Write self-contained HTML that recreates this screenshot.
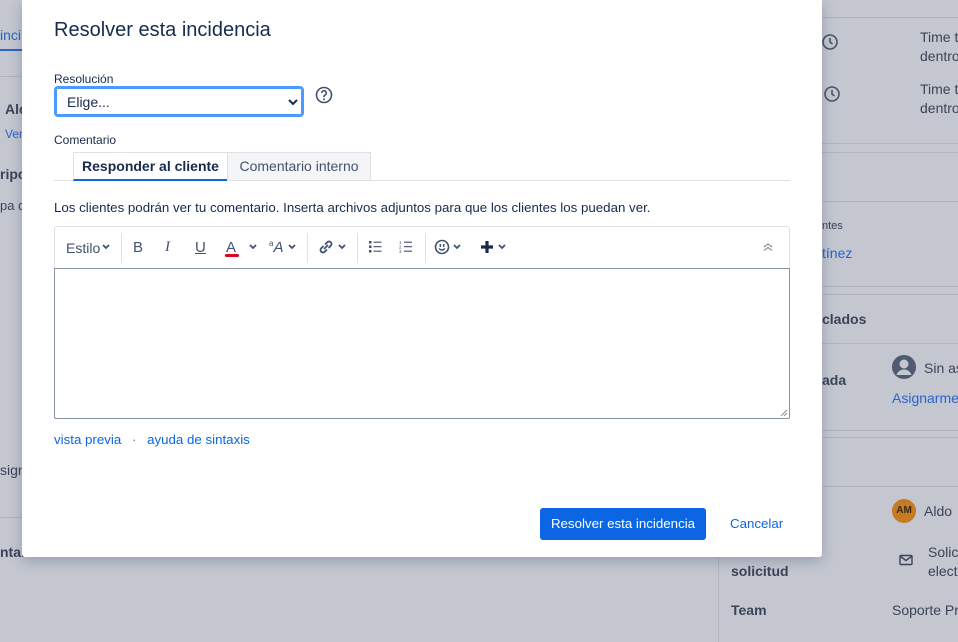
<!DOCTYPE html>
<html><head><meta charset="utf-8"><style>
*{box-sizing:border-box;margin:0;padding:0}
body{width:958px;height:642px;overflow:hidden;background:#c4c7d0;font-family:"Liberation Sans","DejaVu Sans",sans-serif;position:relative;color:#172b4d}
.a{position:absolute;white-space:nowrap}
.hl{position:absolute;height:1px;background:#b0b4be}
.bg{color:#3b4358;font-size:14px}
.blue{color:#2a64c9}
.modal{position:absolute;left:22px;top:0;width:800px;height:557px;background:#fff;border-radius:0 0 3px 3px;box-shadow:0 4px 14px rgba(9,30,66,.25)}
.m{position:absolute;white-space:nowrap}
.tb{position:absolute;top:250px;font-size:15px;color:#42526e}
.sep{position:absolute;top:233px;width:1px;height:30px;background:#dfe1e6}
.cv{position:absolute;top:244px}
</style></head><body>
<div class="a blue" style="left:0;top:27px;font-size:14px">inci</div>
<div class="a" style="left:0;top:49px;width:22px;height:2px;background:#2a64c9"></div>
<div class="hl" style="left:0;top:76px;width:22px"></div>
<div class="a bg" style="left:5px;top:101px;font-weight:bold">Alc</div>
<div class="a blue" style="left:5px;top:127px;font-size:12px">Ver</div>
<div class="a bg" style="left:0;top:166px;font-weight:bold">ripc</div>
<div class="a bg" style="left:0;top:198px;font-size:13px">pa d</div>
<div class="a bg" style="left:0;top:462px">sign</div>
<div class="hl" style="left:0;top:517px;width:22px"></div>
<div class="a bg" style="left:0;top:544px;font-weight:bold">ntar</div>

<div class="hl" style="left:822px;top:17px;width:136px"></div>
<svg class="a" style="left:821px;top:33px" width="18" height="18" viewBox="0 0 18 18"><circle cx="9" cy="9" r="7" fill="none" stroke="#4a5368" stroke-width="1.6"/><path d="M9 5v4l2.5 2" fill="none" stroke="#4a5368" stroke-width="1.6"/></svg>
<svg class="a" style="left:823px;top:85px" width="18" height="18" viewBox="0 0 18 18"><circle cx="9" cy="9" r="7" fill="none" stroke="#4a5368" stroke-width="1.6"/><path d="M9 5v4l2.5 2" fill="none" stroke="#4a5368" stroke-width="1.6"/></svg>
<div class="a bg" style="left:920px;top:28px;line-height:19px">Time t<br>dentro</div>
<div class="a bg" style="left:920px;top:80px;line-height:19px">Time t<br>dentro</div>
<div class="hl" style="left:822px;top:143px;width:136px"></div>
<div class="hl" style="left:822px;top:152px;width:136px"></div>
<div class="hl" style="left:822px;top:201px;width:136px"></div>
<div class="a bg" style="left:822px;top:220px;font-size:11px">ntes</div>
<div class="a blue" style="left:822px;top:245px;font-size:14px">tínez</div>
<div class="hl" style="left:822px;top:286px;width:136px"></div>
<div class="hl" style="left:822px;top:294px;width:136px"></div>
<div class="a bg" style="left:822px;top:311px;font-weight:bold">clados</div>
<div class="hl" style="left:822px;top:343px;width:136px"></div>
<div class="a bg" style="left:822px;top:372px;font-weight:bold">ada</div>
<svg class="a" style="left:891px;top:354px" width="26" height="26" viewBox="0 0 26 26"><circle cx="13" cy="13" r="12" fill="#505a70"/><circle cx="13" cy="10" r="4.5" fill="#c4c7d0"/><path d="M5.5 21c1.5-4 4.5-5.5 7.5-5.5s6 1.5 7.5 5.5" fill="#c4c7d0"/></svg>
<div class="a bg" style="left:924px;top:360px">Sin as</div>
<div class="a blue" style="left:892px;top:390px;font-size:14px">Asignarme</div>
<div class="hl" style="left:822px;top:430px;width:136px"></div>
<div class="hl" style="left:822px;top:437px;width:136px"></div>
<div class="hl" style="left:718px;top:486px;width:240px"></div>
<div class="a" style="left:718px;top:486px;width:1px;height:156px;background:#b0b4be"></div>
<div class="a" style="left:892px;top:499px;width:24px;height:24px;border-radius:50%;background:#c77a22;color:#3a2a10;font-size:10px;font-weight:bold;text-align:center;line-height:24px">AM</div>
<div class="a bg" style="left:924px;top:503px">Aldo</div>
<svg class="a" style="left:899px;top:554px" width="14" height="12" viewBox="0 0 14 12"><rect x="1" y="1.5" width="12" height="9" rx="1" fill="none" stroke="#3b4358" stroke-width="1.4"/><path d="M1.5 2.5l5.5 4 5.5-4" fill="none" stroke="#3b4358" stroke-width="1.4"/></svg>
<div class="a bg" style="left:928px;top:543px;line-height:19px">Solic<br>elect</div>
<div class="a bg" style="left:731px;top:563px;font-weight:bold">solicitud</div>
<div class="a bg" style="left:731px;top:602px;font-weight:bold">Team</div>
<div class="a bg" style="left:892px;top:602px">Soporte Pr</div>

<div class="modal">
<div class="m" style="left:32px;top:19px;font-size:20px;color:#172b4d">Resolver esta incidencia</div>
<div class="m" style="left:32px;top:72px;font-size:12px;color:#172b4d">Resolución</div>
<div class="m" style="left:32px;top:86px;width:250px;height:31px;border:2px solid #4c9aff;border-radius:4px;box-shadow:0 0 0 1px #4c9aff inset"></div>
<div class="m" style="left:45px;top:94px;font-size:14px">Elige...</div>
<svg class="m" style="left:266px;top:98px" width="10" height="8" viewBox="0 0 10 8"><path d="M1 2l4 4 4-4" fill="none" stroke="#172b4d" stroke-width="2"/></svg>
<svg class="m" style="left:293px;top:86px" width="18" height="18" viewBox="0 0 18 18"><circle cx="9" cy="9" r="7.5" fill="none" stroke="#42526e" stroke-width="1.6"/><path d="M6.7 7a2.3 2.3 0 1 1 3.2 2.1c-.6.3-.9.7-.9 1.4v.5" fill="none" stroke="#42526e" stroke-width="1.6"/><circle cx="9" cy="13.2" r="1" fill="#42526e"/></svg>
<div class="m" style="left:32px;top:133px;font-size:12px">Comentario</div>
<div class="m" style="left:32px;top:180px;width:736px;height:1px;background:#dfe1e6"></div>
<div class="m" style="left:51px;top:152px;width:155px;height:29px;border:1px solid #dfe1e6;border-bottom:2px solid #0c66e4;background:#fff;font-size:14px;font-weight:bold;text-align:center;line-height:27px">Responder al cliente</div>
<div class="m" style="left:205px;top:152px;width:144px;height:29px;border:1px solid #dfe1e6;background:#f4f5f7;font-size:14px;color:#42526e;text-align:center;line-height:27px">Comentario interno</div>
<div class="m" style="left:32px;top:200px;font-size:13.3px;color:#172b4d">Los clientes podrán ver tu comentario. Inserta archivos adjuntos para que los clientes los puedan ver.</div>
<div class="m" style="left:32px;top:226px;width:736px;height:193px;border:1px solid #dfe1e6;border-radius:3px"></div>
<div class="m" style="left:32px;top:268px;width:736px;height:151px;border:1px solid #8993a4;border-radius:0 0 2px 2px"></div>
<div class="tb" style="left:44px;top:240px;font-size:14px">Estilo</div>
<svg class="cv" style="left:80px" width="8" height="6" viewBox="0 0 8 6"><path d="M1 1l3 3 3-3" fill="none" stroke="#42526e" stroke-width="1.8"/></svg>
<div class="sep" style="left:99px"></div>
<div class="tb" style="left:111px;top:239px">B</div>
<div class="tb" style="left:143px;top:239px;font-style:italic;font-family:'Liberation Serif',serif">I</div>
<div class="tb" style="left:173px;top:239px;text-decoration:underline">U</div>
<div class="tb" style="left:204px;top:239px">A</div>
<div class="m" style="left:203px;top:254px;width:14px;height:3px;background:#e2001a;border-radius:2px"></div>
<svg class="cv" style="left:227px" width="8" height="6" viewBox="0 0 8 6"><path d="M1 1l3 3 3-3" fill="none" stroke="#42526e" stroke-width="1.8"/></svg>
<div class="tb" style="left:247px;top:239px;font-style:italic"><sup style="font-size:8px;font-style:normal">a</sup>A</div>
<svg class="cv" style="left:266px" width="8" height="6" viewBox="0 0 8 6"><path d="M1 1l3 3 3-3" fill="none" stroke="#42526e" stroke-width="1.8"/></svg>
<div class="sep" style="left:285px"></div>
<svg class="m" style="left:295px;top:238px" width="18" height="18" viewBox="0 0 18 18"><path d="M7.5 10.5l3-3M6 8.5l-2 2a2.5 2.5 0 0 0 3.5 3.5l2-2M12 9.5l2-2A2.5 2.5 0 0 0 10.5 4l-2 2" fill="none" stroke="#42526e" stroke-width="1.8" stroke-linecap="round"/></svg>
<svg class="cv" style="left:316px" width="8" height="6" viewBox="0 0 8 6"><path d="M1 1l3 3 3-3" fill="none" stroke="#42526e" stroke-width="1.8"/></svg>
<div class="sep" style="left:335px"></div>
<svg class="m" style="left:346px;top:240px" width="14" height="13" viewBox="0 0 14 13"><rect x="1" y="1" width="2.5" height="2.5" fill="#42526e"/><rect x="1" y="5.5" width="2.5" height="2.5" fill="#42526e"/><rect x="1" y="10" width="2.5" height="2.5" fill="#42526e"/><path d="M5.5 2.2h8M5.5 6.7h8M5.5 11.2h8" stroke="#42526e" stroke-width="1.2"/></svg>
<svg class="m" style="left:377px;top:240px" width="14" height="13" viewBox="0 0 14 13"><text x="0" y="4" font-size="4.5" fill="#42526e">1</text><text x="0" y="8.5" font-size="4.5" fill="#42526e">2</text><text x="0" y="13" font-size="4.5" fill="#42526e">3</text><path d="M5 2.2h8M5 6.7h8M5 11.2h8" stroke="#42526e" stroke-width="1.2"/></svg>
<div class="sep" style="left:403px"></div>
<svg class="m" style="left:412px;top:239px" width="16" height="16" viewBox="0 0 16 16"><circle cx="8" cy="8" r="6.5" fill="none" stroke="#42526e" stroke-width="1.6"/><rect x="5.6" y="5" width="1.5" height="3" fill="#42526e"/><rect x="8.9" y="5" width="1.5" height="3" fill="#42526e"/><path d="M5 9.5q3 3 6 0" fill="none" stroke="#42526e" stroke-width="1.5"/></svg>
<svg class="cv" style="left:431px" width="8" height="6" viewBox="0 0 8 6"><path d="M1 1l3 3 3-3" fill="none" stroke="#42526e" stroke-width="1.8"/></svg>
<svg class="m" style="left:458px;top:240px" width="14" height="14" viewBox="0 0 14 14"><path d="M7 1v12M1 7h12" stroke="#172b4d" stroke-width="3.2"/></svg>
<svg class="cv" style="left:476px" width="8" height="6" viewBox="0 0 8 6"><path d="M1 1l3 3 3-3" fill="none" stroke="#42526e" stroke-width="1.8"/></svg>
<svg class="m" style="left:740px;top:242px" width="12" height="10" viewBox="0 0 12 10"><path d="M2 5l4-3 4 3M2 8.5l4-3 4 3" fill="none" stroke="#8993a4" stroke-width="1.2"/></svg>
<svg class="m" style="left:757px;top:408px" width="9" height="9" viewBox="0 0 9 9"><path d="M8 2L2 8M8 5L5 8" stroke="#8993a4" stroke-width="1"/></svg>
<div class="m" style="left:32px;top:432px;font-size:13.3px;color:#0c66e4">vista previa <span style="color:#6b778c;margin:0 7px">·</span> ayuda de sintaxis</div>
<div class="m" style="left:518px;top:508px;width:166px;height:32px;background:#0c66e4;border-radius:3px;color:#fff;font-size:13.3px;text-align:center;line-height:32px">Resolver esta incidencia</div>
<div class="m" style="left:708px;top:516px;font-size:13.3px;color:#0c66e4">Cancelar</div>
</div>
</body></html>
